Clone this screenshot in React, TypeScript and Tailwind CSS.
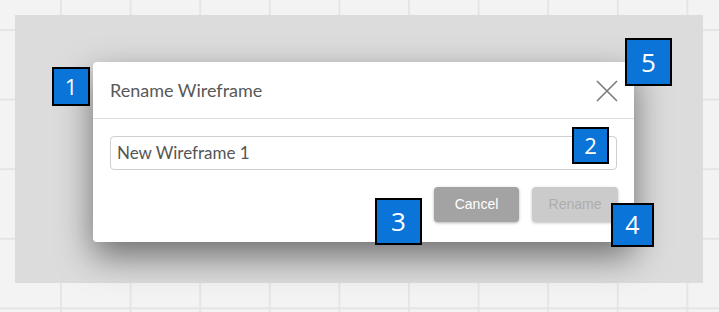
import React from "react";

function Badge({ n, className }: { n: string; className: string }) {
  return (
    <div
      className={`absolute flex items-center justify-center border-2 border-black bg-[#0a74d8] text-white font-['Open_Sans',sans-serif] ${className}`}
    >
      {n}
    </div>
  );
}

export default function App() {
  return (
    <div className="relative w-[719px] h-[312px] overflow-hidden bg-[#f3f3f3] bg-[linear-gradient(to_right,#e5e5e5_2px,transparent_2px),linear-gradient(to_bottom,#e5e5e5_2px,transparent_2px)] bg-[size:69.6px_69.6px] bg-[position:60px_29px] p-[15px] font-['Lato',sans-serif]">
      {/* dimmed overlay */}
      <div className="w-[688px] h-[268px] bg-[#dcdcdc] pl-[78px] pt-[47px]">
        {/* dialog */}
        <div className="w-[541px] h-[180px] rounded-[4px] bg-white shadow-[0_14px_34px_rgba(0,0,0,0.5)] flex flex-col">
          <div className="h-[57px] flex items-center justify-between pl-[17px] pr-[16px] border-b border-[#dedede]">
            <span className="text-[18px] text-[#585858]">Rename Wireframe</span>
            <svg width="22" height="22" viewBox="0 0 22 22" className="mt-[1px]">
              <path d="M1 1L21 21M21 1L1 21" stroke="#7a7a7a" strokeWidth="1.6" />
            </svg>
          </div>
          <div className="px-[17px] pt-[17px]">
            <div className="h-[34px] w-[507px] rounded-[4px] border border-[#cfcfcf] flex items-center pl-[6px] text-[17px] text-[#555]">
              New Wireframe 1
            </div>
          </div>
          <div className="flex justify-end gap-[13px] pr-[16px] pt-[17px] font-['Liberation_Sans',sans-serif] text-[14px]">
            <div className="w-[85px] h-[35px] rounded-[4px] bg-[#a3a3a3] text-white flex items-center justify-center shadow-[0_1px_3px_rgba(0,0,0,0.3)]">
              Cancel
            </div>
            <div className="w-[86px] h-[35px] rounded-[4px] bg-[#cbcbcb] text-[#adadad] flex items-center justify-center shadow-[0_1px_3px_rgba(0,0,0,0.25)]">
              Rename
            </div>
          </div>
        </div>
      </div>

      <Badge n="1" className="left-[52px] top-[67px] w-[38px] h-[39px] text-[22px]" />
      <Badge n="2" className="left-[572px] top-[127px] w-[37px] h-[37px] text-[22px]" />
      <Badge n="3" className="left-[375px] top-[198px] w-[47px] h-[47px] text-[26px]" />
      <Badge n="4" className="left-[611px] top-[203px] w-[43px] h-[44px] text-[25px]" />
      <Badge n="5" className="left-[625px] top-[38px] w-[47px] h-[48px] text-[26px]" />
    </div>
  );
}
